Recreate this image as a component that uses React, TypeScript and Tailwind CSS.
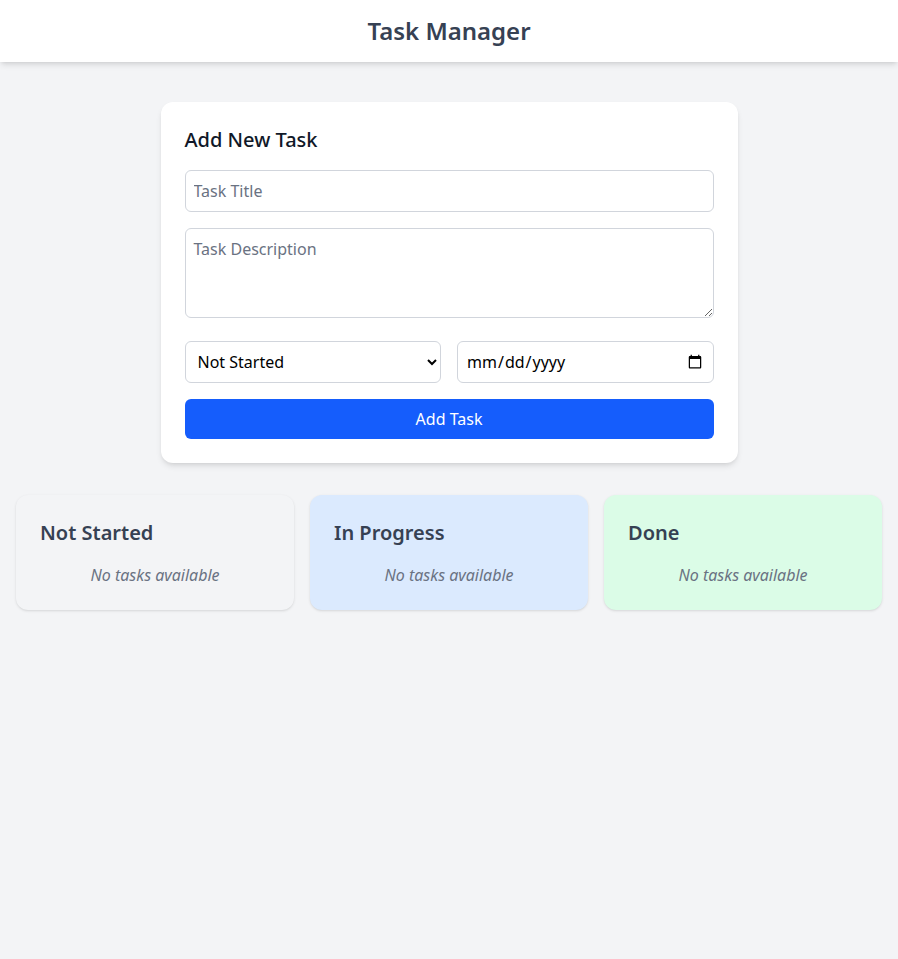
import { useState } from "react";

type Status = "Not Started" | "In Progress" | "Done";

interface Task {
  id: number;
  title: string;
  description: string;
  status: Status;
  dueDate: string;
}

const COLUMNS: { status: Status; className: string }[] = [
  { status: "Not Started", className: "bg-gray-100" },
  { status: "In Progress", className: "bg-blue-100" },
  { status: "Done", className: "bg-green-100" },
];

export default function App() {
  const [tasks, setTasks] = useState<Task[]>([]);
  const [title, setTitle] = useState("");
  const [description, setDescription] = useState("");
  const [status, setStatus] = useState<Status>("Not Started");
  const [dueDate, setDueDate] = useState("");

  const handleAdd = () => {
    if (!title.trim()) return;
    setTasks(prev => [...prev, { id: Date.now(), title, description, status, dueDate }]);
    setTitle("");
    setDescription("");
  };

  return (
    <div className="min-h-screen bg-gray-100 font-['Noto_Sans',sans-serif]">
      {/* Header */}
      <header className="h-[62px] bg-white shadow-md flex items-center justify-center">
        <h1 className="text-2xl font-semibold text-gray-700">Task Manager</h1>
      </header>

      <main className="px-4 pt-10 pb-8">
        {/* Form */}
        <div className="max-w-[577px] mx-auto bg-white rounded-xl shadow-md p-6 mb-8">
          <h2 className="text-xl font-medium text-gray-900 mb-4">Add New Task</h2>
          <input
            type="text"
            placeholder="Task Title"
            value={title}
            onChange={e => setTitle(e.target.value)}
            className="block w-full mb-4 p-2 border border-gray-300 rounded-md text-base text-gray-900 placeholder:text-gray-500 outline-none"
          />
          <textarea
            placeholder="Task Description"
            rows={3}
            value={description}
            onChange={e => setDescription(e.target.value)}
            className="block w-full h-[90px] mb-[23px] p-2 border border-gray-300 rounded-md text-base text-gray-900 placeholder:text-gray-500 outline-none"
          />
          <div className="grid grid-cols-2 gap-4 mb-4">
            <select
              value={status}
              onChange={e => setStatus(e.target.value as Status)}
              className="w-full h-[42px] p-2 border border-gray-300 rounded-md text-base text-black bg-white outline-none"
            >
              <option>Not Started</option>
              <option>In Progress</option>
              <option>Done</option>
            </select>
            <input
              type="date"
              value={dueDate}
              onChange={e => setDueDate(e.target.value)}
              className="w-full h-[42px] p-2 border border-gray-300 rounded-md text-base text-black outline-none"
            />
          </div>
          <button
            onClick={handleAdd}
            className="block w-full h-10 rounded-md bg-blue-600 text-white text-base hover:bg-blue-700"
          >
            Add Task
          </button>
        </div>

        {/* Columns */}
        <div className="grid grid-cols-3 gap-4">
          {COLUMNS.map(col => {
            const list = tasks.filter(t => t.status === col.status);
            return (
              <div key={col.status} className={`rounded-xl shadow-sm px-6 pt-6 pb-[23px] ${col.className}`}>
                <h3 className="text-xl font-semibold text-gray-700 mb-4">{col.status}</h3>
                {list.length === 0 ? (
                  <p className="text-center italic text-gray-500">No tasks available</p>
                ) : (
                  list.map(t => (
                    <div key={t.id} className="bg-white rounded-md p-3 mb-2 shadow-sm">
                      <p className="font-medium text-gray-800">{t.title}</p>
                      {t.description && <p className="text-sm text-gray-600">{t.description}</p>}
                    </div>
                  ))
                )}
              </div>
            );
          })}
        </div>
      </main>
    </div>
  );
}
